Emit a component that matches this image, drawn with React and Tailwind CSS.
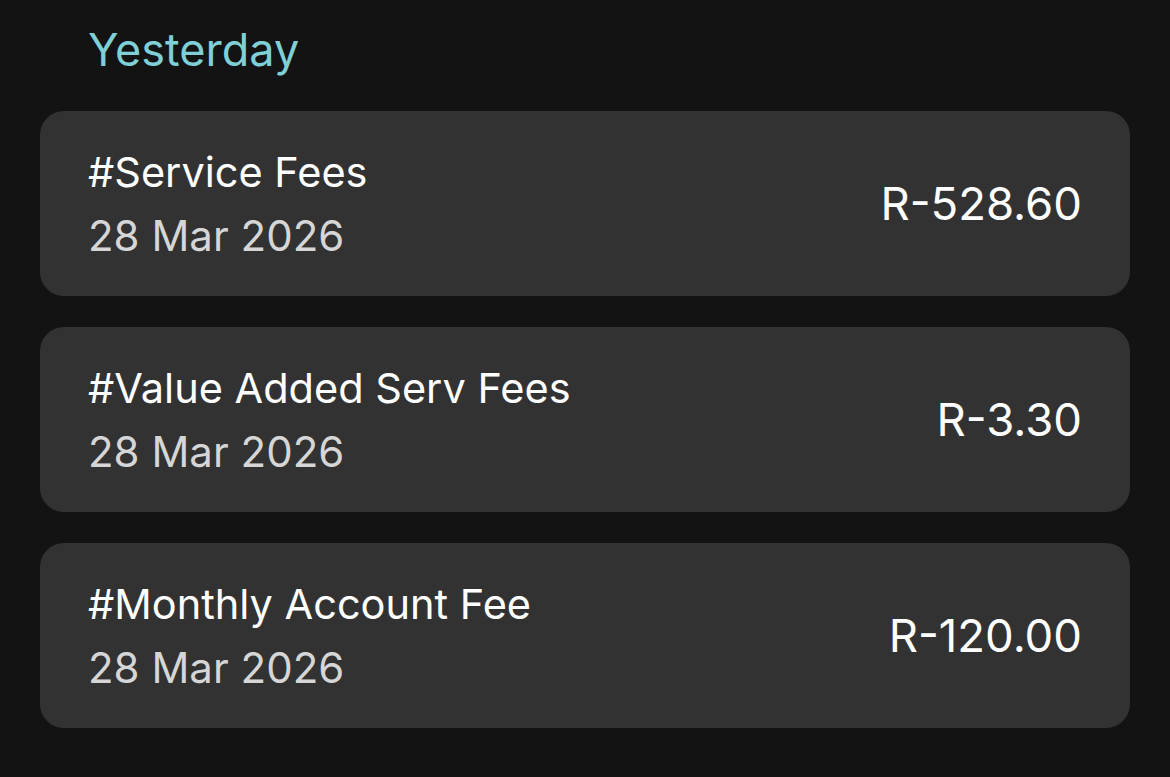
import React from "react";

const transactions = [
  { id: 1, title: "#Service Fees", date: "28 Mar 2026", amount: "R-528.60" },
  { id: 2, title: "#Value Added Serv Fees", date: "28 Mar 2026", amount: "R-3.30" },
  { id: 3, title: "#Monthly Account Fee", date: "28 Mar 2026", amount: "R-120.00" },
];

const TransactionCard = ({ title, date, amount }) => (
  <div className="flex h-[185px] items-center justify-between rounded-[24px] bg-[#323232] px-12">
    <div className="flex flex-col">
      <p className="text-[41.5px] leading-[64px] text-white">{title}</p>
      <p className="text-[42px] leading-[64px] text-[#d6d6d6]">{date}</p>
    </div>
    <p className="text-[45.5px] leading-none text-white">{amount}</p>
  </div>
);

export default function App() {
  return (
    <div
      className="min-h-[777px] w-full bg-[#131313] px-10 pt-[22px]"
      style={{ fontFamily: "Inter, 'Noto Sans', sans-serif" }}
    >
      {/* Section header */}
      <h2 className="ml-12 text-[45px] leading-[56px] text-[#7fd0d6]">Yesterday</h2>

      <div className="mt-[33px] flex flex-col gap-[31px]">
        {transactions.map((t) => (
          <TransactionCard key={t.id} title={t.title} date={t.date} amount={t.amount} />
        ))}
      </div>
    </div>
  );
}
